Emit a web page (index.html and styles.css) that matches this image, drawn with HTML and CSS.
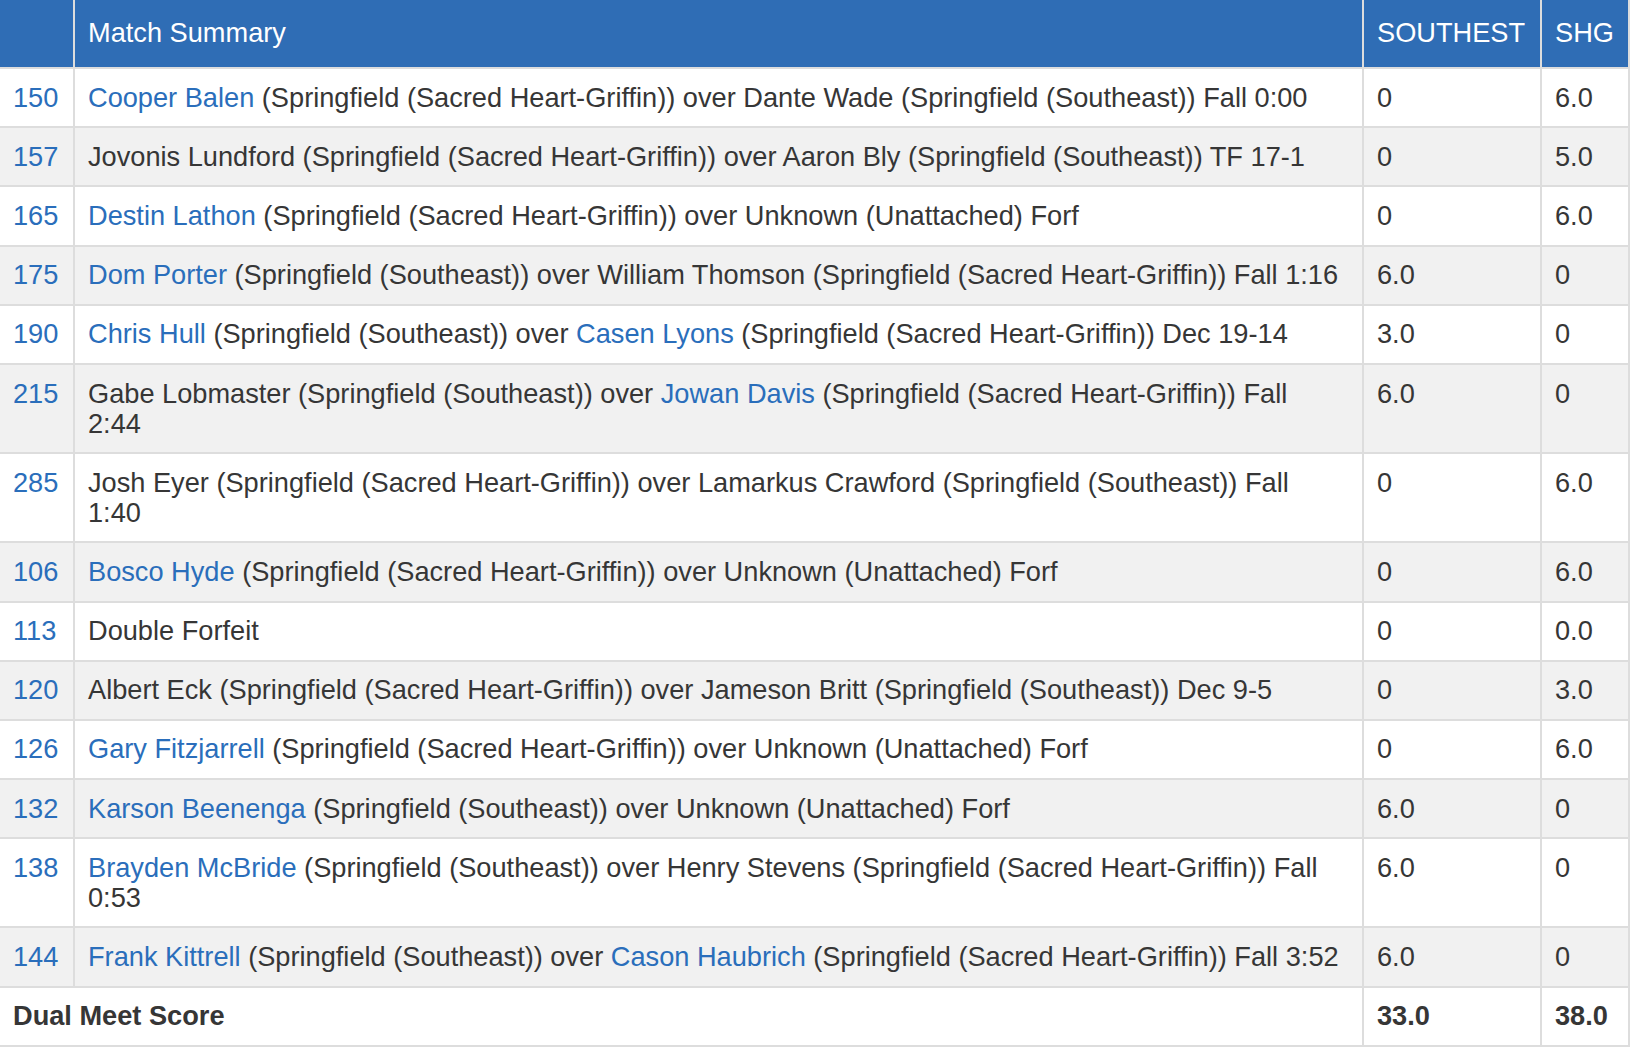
FILE: index.html
```html
<!DOCTYPE html>
<html>
<head>
<meta charset="utf-8">
<link rel="stylesheet" href="styles.css">
</head>
<body>
<table class="dual">
  <thead>
    <tr>
      <th class="c-wt"></th>
      <th class="c-sum">Match Summary</th>
      <th class="c-a">SOUTHEST</th>
      <th class="c-b">SHG</th>
    </tr>
  </thead>
  <tbody>
    <tr><td><a href="#">150</a></td><td class="sum"><a href="#">Cooper Balen</a> (Springfield (Sacred Heart-Griffin)) over Dante Wade (Springfield (Southeast)) Fall 0:00</td><td>0</td><td>6.0</td></tr>
    <tr><td><a href="#">157</a></td><td class="sum">Jovonis Lundford (Springfield (Sacred Heart-Griffin)) over Aaron Bly (Springfield (Southeast)) TF 17-1</td><td>0</td><td>5.0</td></tr>
    <tr><td><a href="#">165</a></td><td class="sum"><a href="#">Destin Lathon</a> (Springfield (Sacred Heart-Griffin)) over Unknown (Unattached) Forf</td><td>0</td><td>6.0</td></tr>
    <tr><td><a href="#">175</a></td><td class="sum"><a href="#">Dom Porter</a> (Springfield (Southeast)) over William Thomson (Springfield (Sacred Heart-Griffin)) Fall 1:16</td><td>6.0</td><td>0</td></tr>
    <tr><td><a href="#">190</a></td><td class="sum"><a href="#">Chris Hull</a> (Springfield (Southeast)) over <a href="#">Casen Lyons</a> (Springfield (Sacred Heart-Griffin)) Dec 19-14</td><td>3.0</td><td>0</td></tr>
    <tr><td><a href="#">215</a></td><td class="sum">Gabe Lobmaster (Springfield (Southeast)) over <a href="#">Jowan Davis</a> (Springfield (Sacred Heart-Griffin)) Fall 2:44</td><td>6.0</td><td>0</td></tr>
    <tr><td><a href="#">285</a></td><td class="sum">Josh Eyer (Springfield (Sacred Heart-Griffin)) over Lamarkus Crawford (Springfield (Southeast)) Fall 1:40</td><td>0</td><td>6.0</td></tr>
    <tr><td><a href="#">106</a></td><td class="sum"><a href="#">Bosco Hyde</a> (Springfield (Sacred Heart-Griffin)) over Unknown (Unattached) Forf</td><td>0</td><td>6.0</td></tr>
    <tr><td><a href="#">113</a></td><td class="sum">Double Forfeit</td><td>0</td><td>0.0</td></tr>
    <tr><td><a href="#">120</a></td><td class="sum">Albert Eck (Springfield (Sacred Heart-Griffin)) over Jameson Britt (Springfield (Southeast)) Dec 9-5</td><td>0</td><td>3.0</td></tr>
    <tr><td><a href="#">126</a></td><td class="sum"><a href="#">Gary Fitzjarrell</a> (Springfield (Sacred Heart-Griffin)) over Unknown (Unattached) Forf</td><td>0</td><td>6.0</td></tr>
    <tr><td><a href="#">132</a></td><td class="sum"><a href="#">Karson Beenenga</a> (Springfield (Southeast)) over Unknown (Unattached) Forf</td><td>6.0</td><td>0</td></tr>
    <tr><td><a href="#">138</a></td><td class="sum"><a href="#">Brayden McBride</a> (Springfield (Southeast)) over Henry Stevens (Springfield (Sacred Heart-Griffin)) Fall 0:53</td><td>6.0</td><td>0</td></tr>
    <tr><td><a href="#">144</a></td><td class="sum"><a href="#">Frank Kittrell</a> (Springfield (Southeast)) over <a href="#">Cason Haubrich</a> (Springfield (Sacred Heart-Griffin)) Fall 3:52</td><td>6.0</td><td>0</td></tr>
  </tbody>
  <tfoot>
    <tr><td colspan="2">Dual Meet Score</td><td>33.0</td><td>38.0</td></tr>
  </tfoot>
</table>
</body>
</html>
```

FILE: styles.css
```css
html, body {
  margin: 0;
  padding: 0;
  background: #ffffff;
}

body {
  font-family: "Liberation Sans", Arial, Helvetica, sans-serif;
  font-size: 27.2px;
  line-height: 30px;
  color: #363636;
}

.dual {
  border-collapse: collapse;
  width: 1632px;
  margin-left: -2px;
  table-layout: fixed;
}

.dual th,
.dual td {
  border: 2px solid #dddddd;
  text-align: left;
  vertical-align: top;
}

.dual th {
  background: #2f6db5;
  color: #ffffff;
  font-weight: normal;
  border-top: 0;
  padding: 18px 13px 19px;
}

.dual td {
  padding: 13.6px 13px;
}

.dual td.sum {
  padding-right: 20px;
}

.c-wt { width: 47px; }
.c-a { width: 150px; }
.c-b { width: 60px; }

.dual tbody tr:nth-child(even) td {
  background: #f1f1f1;
}

.dual a {
  color: #2a6ebb;
  text-decoration: none;
}

.dual tfoot td {
  font-weight: bold;
}
```
